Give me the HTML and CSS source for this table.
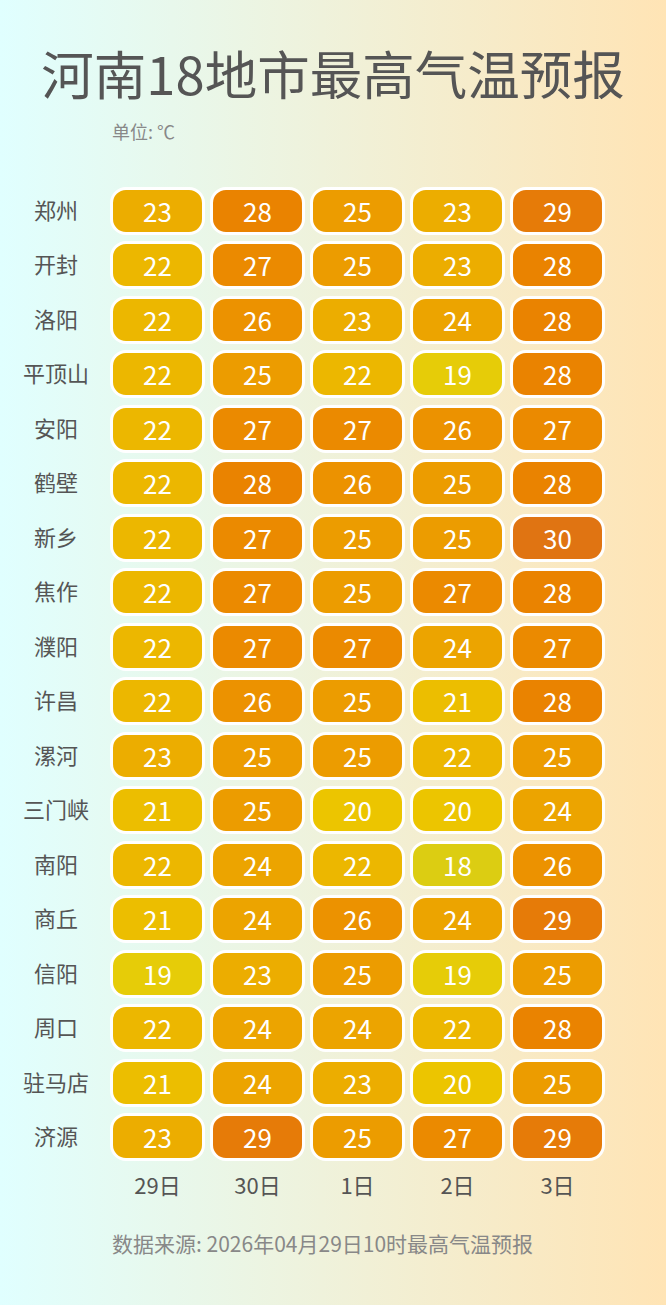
FILE: index.html
```html
<!DOCTYPE html>
<html lang="zh">
<head>
<meta charset="utf-8">
<title>河南18地市最高气温预报</title>
<link rel="stylesheet" href="styles.css">
</head>
<body>
<main class="page">
  <h1 class="title">河南18地市最高气温预报</h1>
  <div class="unit">单位: ℃</div>
  <div class="grid">
    <div class="city">郑州</div><div class="cell t23">23</div><div class="cell t28">28</div><div class="cell t25">25</div><div class="cell t23">23</div><div class="cell t29">29</div>
    <div class="city">开封</div><div class="cell t22">22</div><div class="cell t27">27</div><div class="cell t25">25</div><div class="cell t23">23</div><div class="cell t28">28</div>
    <div class="city">洛阳</div><div class="cell t22">22</div><div class="cell t26">26</div><div class="cell t23">23</div><div class="cell t24">24</div><div class="cell t28">28</div>
    <div class="city">平顶山</div><div class="cell t22">22</div><div class="cell t25">25</div><div class="cell t22">22</div><div class="cell t19">19</div><div class="cell t28">28</div>
    <div class="city">安阳</div><div class="cell t22">22</div><div class="cell t27">27</div><div class="cell t27">27</div><div class="cell t26">26</div><div class="cell t27">27</div>
    <div class="city">鹤壁</div><div class="cell t22">22</div><div class="cell t28">28</div><div class="cell t26">26</div><div class="cell t25">25</div><div class="cell t28">28</div>
    <div class="city">新乡</div><div class="cell t22">22</div><div class="cell t27">27</div><div class="cell t25">25</div><div class="cell t25">25</div><div class="cell t30">30</div>
    <div class="city">焦作</div><div class="cell t22">22</div><div class="cell t27">27</div><div class="cell t25">25</div><div class="cell t27">27</div><div class="cell t28">28</div>
    <div class="city">濮阳</div><div class="cell t22">22</div><div class="cell t27">27</div><div class="cell t27">27</div><div class="cell t24">24</div><div class="cell t27">27</div>
    <div class="city">许昌</div><div class="cell t22">22</div><div class="cell t26">26</div><div class="cell t25">25</div><div class="cell t21">21</div><div class="cell t28">28</div>
    <div class="city">漯河</div><div class="cell t23">23</div><div class="cell t25">25</div><div class="cell t25">25</div><div class="cell t22">22</div><div class="cell t25">25</div>
    <div class="city">三门峡</div><div class="cell t21">21</div><div class="cell t25">25</div><div class="cell t20">20</div><div class="cell t20">20</div><div class="cell t24">24</div>
    <div class="city">南阳</div><div class="cell t22">22</div><div class="cell t24">24</div><div class="cell t22">22</div><div class="cell t18">18</div><div class="cell t26">26</div>
    <div class="city">商丘</div><div class="cell t21">21</div><div class="cell t24">24</div><div class="cell t26">26</div><div class="cell t24">24</div><div class="cell t29">29</div>
    <div class="city">信阳</div><div class="cell t19">19</div><div class="cell t23">23</div><div class="cell t25">25</div><div class="cell t19">19</div><div class="cell t25">25</div>
    <div class="city">周口</div><div class="cell t22">22</div><div class="cell t24">24</div><div class="cell t24">24</div><div class="cell t22">22</div><div class="cell t28">28</div>
    <div class="city">驻马店</div><div class="cell t21">21</div><div class="cell t24">24</div><div class="cell t23">23</div><div class="cell t20">20</div><div class="cell t25">25</div>
    <div class="city">济源</div><div class="cell t23">23</div><div class="cell t29">29</div><div class="cell t25">25</div><div class="cell t27">27</div><div class="cell t29">29</div>
    <div class="blank"></div><div class="day">29日</div><div class="day">30日</div><div class="day">1日</div><div class="day">2日</div><div class="day">3日</div>
  </div>
  <p class="source">数据来源: 2026年04月29日10时最高气温预报</p>
</main>
</body>
</html>
```

FILE: styles.css
```css
* { box-sizing: border-box; }
html, body { margin: 0; padding: 0; }
body {
  width: 666px;
  height: 1305px;
  overflow: hidden;
  background: linear-gradient(90deg, #e0ffff 0%, #ffe4b5 100%);
  font-family: "Noto Sans CJK SC", "Noto Sans", sans-serif;
}
.page {
  display: flex;
  flex-direction: column;
  height: 1305px;
}
.title {
  margin: 37px 0 0 0;
  text-align: center;
  font-size: 52.5px;
  line-height: 70px;
  font-weight: 400;
  color: #555555;
}
.unit {
  margin: 12px 0 0 112px;
  font-size: 18px;
  line-height: 24px;
  color: #888888;
}
.grid {
  margin-top: 44px;
  display: grid;
  grid-template-columns: 105px repeat(5, 95px);
  grid-auto-rows: 48px;
  column-gap: 5px;
  row-gap: 6.47px;
}
.city {
  padding-left: 7px;
  display: flex;
  align-items: center;
  justify-content: center;
  font-size: 22px;
  color: #555555;
  padding-bottom: 4px;
}
.cell {
  border: 3px solid #ffffff;
  border-radius: 16px;
  display: flex;
  align-items: center;
  justify-content: center;
  color: #ffffff;
  font-size: 26px;
  line-height: 1;
}
.day {
  display: flex;
  justify-content: center;
  align-items: flex-start;
  padding-top: 2px;
  font-size: 22px;
  line-height: 30px;
  color: #555555;
}
.source {
  margin: 14px 0 0 112px;
  font-size: 21px;
  line-height: 28px;
  color: #888888;
}
.t18 { background: #dccd12; }
.t19 { background: #e6cc08; }
.t20 { background: #ecc500; }
.t21 { background: #ecbe00; }
.t22 { background: #ecb700; }
.t23 { background: #ecad00; }
.t24 { background: #eca400; }
.t25 { background: #ec9c00; }
.t26 { background: #ec9200; }
.t27 { background: #eb8a00; }
.t28 { background: #ea8300; }
.t29 { background: #e67b08; }
.t30 { background: #e07412; }
```
